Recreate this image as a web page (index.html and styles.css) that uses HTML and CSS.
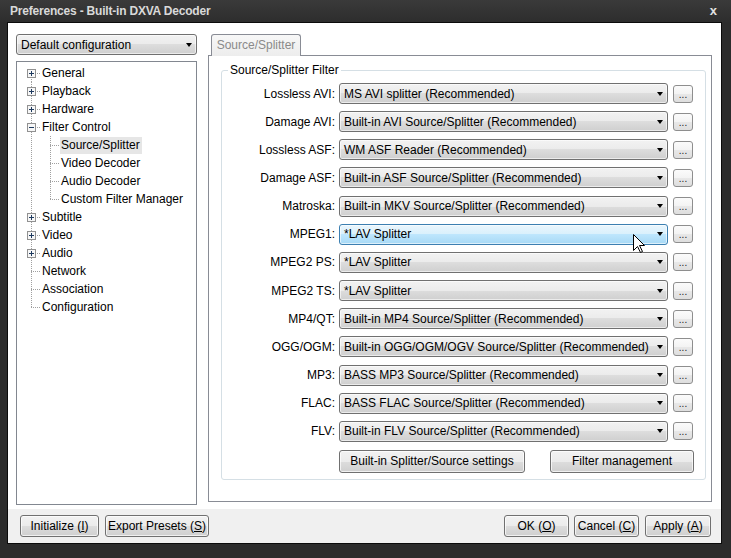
FILE: index.html
```html
<!DOCTYPE html>
<html>
<head>
<meta charset="utf-8">
<title>Preferences - Built-in DXVA Decoder</title>
<link rel="stylesheet" href="styles.css">
</head>
<body>
<div class="window">
  <div class="titlebar">
    <span class="title">Preferences - Built-in DXVA Decoder</span>
    <span class="close">x</span>
  </div>
  <div class="frame">
    <div class="client">
      <div class="main">
        <div class="left">
          <div class="select"><span>Default configuration</span><span class="arrow"></span></div>
          <div class="tree">
            <div class="trow"><span class="ln ln-first"><svg class="box" width="9" height="9" viewBox="0 0 9 9"><rect x="0.5" y="0.5" width="8" height="8" fill="#f7f7f7" stroke="#919191"/><path d="M2 4.5H7M4.5 2V7" stroke="#1e3a5f"/></svg></span><span class="tl">General</span></div>
            <div class="trow"><span class="ln ln-mid"><svg class="box" width="9" height="9" viewBox="0 0 9 9"><rect x="0.5" y="0.5" width="8" height="8" fill="#f7f7f7" stroke="#919191"/><path d="M2 4.5H7M4.5 2V7" stroke="#1e3a5f"/></svg></span><span class="tl">Playback</span></div>
            <div class="trow"><span class="ln ln-mid"><svg class="box" width="9" height="9" viewBox="0 0 9 9"><rect x="0.5" y="0.5" width="8" height="8" fill="#f7f7f7" stroke="#919191"/><path d="M2 4.5H7M4.5 2V7" stroke="#1e3a5f"/></svg></span><span class="tl">Hardware</span></div>
            <div class="trow"><span class="ln ln-mid"><svg class="box" width="9" height="9" viewBox="0 0 9 9"><rect x="0.5" y="0.5" width="8" height="8" fill="#f7f7f7" stroke="#919191"/><path d="M2 4.5H7" stroke="#1e3a5f"/></svg></span><span class="tl">Filter Control</span></div>
            <div class="trow"><span class="ln ln-v"></span><span class="ln ln-mid"></span><span class="tl sel">Source/Splitter</span></div>
            <div class="trow"><span class="ln ln-v"></span><span class="ln ln-mid"></span><span class="tl">Video Decoder</span></div>
            <div class="trow"><span class="ln ln-v"></span><span class="ln ln-mid"></span><span class="tl">Audio Decoder</span></div>
            <div class="trow"><span class="ln ln-v"></span><span class="ln ln-last"></span><span class="tl">Custom Filter Manager</span></div>
            <div class="trow"><span class="ln ln-mid"><svg class="box" width="9" height="9" viewBox="0 0 9 9"><rect x="0.5" y="0.5" width="8" height="8" fill="#f7f7f7" stroke="#919191"/><path d="M2 4.5H7M4.5 2V7" stroke="#1e3a5f"/></svg></span><span class="tl">Subtitle</span></div>
            <div class="trow"><span class="ln ln-mid"><svg class="box" width="9" height="9" viewBox="0 0 9 9"><rect x="0.5" y="0.5" width="8" height="8" fill="#f7f7f7" stroke="#919191"/><path d="M2 4.5H7M4.5 2V7" stroke="#1e3a5f"/></svg></span><span class="tl">Video</span></div>
            <div class="trow"><span class="ln ln-mid"><svg class="box" width="9" height="9" viewBox="0 0 9 9"><rect x="0.5" y="0.5" width="8" height="8" fill="#f7f7f7" stroke="#919191"/><path d="M2 4.5H7M4.5 2V7" stroke="#1e3a5f"/></svg></span><span class="tl">Audio</span></div>
            <div class="trow"><span class="ln ln-mid"></span><span class="tl">Network</span></div>
            <div class="trow"><span class="ln ln-mid"></span><span class="tl">Association</span></div>
            <div class="trow"><span class="ln ln-last"></span><span class="tl">Configuration</span></div>
          </div>
        </div>
        <div class="right">
          <div class="tabs"><div class="tab">Source/Splitter</div></div>
          <div class="panel">
            <fieldset class="group">
              <legend>Source/Splitter Filter</legend>
              <div class="rows">
                <div class="row"><span class="lbl">Lossless AVI:</span><div class="combo"><span class="ctext">MS AVI splitter (Recommended)</span><span class="arrow"></span></div><div class="dots">...</div></div>
                <div class="row"><span class="lbl">Damage AVI:</span><div class="combo"><span class="ctext">Built-in AVI Source/Splitter (Recommended)</span><span class="arrow"></span></div><div class="dots">...</div></div>
                <div class="row"><span class="lbl">Lossless ASF:</span><div class="combo"><span class="ctext">WM ASF Reader (Recommended)</span><span class="arrow"></span></div><div class="dots">...</div></div>
                <div class="row"><span class="lbl">Damage ASF:</span><div class="combo"><span class="ctext">Built-in ASF Source/Splitter (Recommended)</span><span class="arrow"></span></div><div class="dots">...</div></div>
                <div class="row"><span class="lbl">Matroska:</span><div class="combo"><span class="ctext">Built-in MKV Source/Splitter (Recommended)</span><span class="arrow"></span></div><div class="dots">...</div></div>
                <div class="row"><span class="lbl">MPEG1:</span><div class="combo hover"><span class="ctext">*LAV Splitter</span><span class="arrow"></span></div><div class="dots">...</div></div>
                <div class="row"><span class="lbl">MPEG2 PS:</span><div class="combo"><span class="ctext">*LAV Splitter</span><span class="arrow"></span></div><div class="dots">...</div></div>
                <div class="row"><span class="lbl">MPEG2 TS:</span><div class="combo"><span class="ctext">*LAV Splitter</span><span class="arrow"></span></div><div class="dots">...</div></div>
                <div class="row"><span class="lbl">MP4/QT:</span><div class="combo"><span class="ctext">Built-in MP4 Source/Splitter (Recommended)</span><span class="arrow"></span></div><div class="dots">...</div></div>
                <div class="row"><span class="lbl">OGG/OGM:</span><div class="combo"><span class="ctext">Built-in OGG/OGM/OGV Source/Splitter (Recommended)</span><span class="arrow"></span></div><div class="dots">...</div></div>
                <div class="row"><span class="lbl">MP3:</span><div class="combo"><span class="ctext">BASS MP3 Source/Splitter (Recommended)</span><span class="arrow"></span></div><div class="dots">...</div></div>
                <div class="row"><span class="lbl">FLAC:</span><div class="combo"><span class="ctext">BASS FLAC Source/Splitter (Recommended)</span><span class="arrow"></span></div><div class="dots">...</div></div>
                <div class="row"><span class="lbl">FLV:</span><div class="combo"><span class="ctext">Built-in FLV Source/Splitter (Recommended)</span><span class="arrow"></span></div><div class="dots">...</div></div>
              </div>
              <div class="actions">
                <div class="btn btn-settings">Built-in Splitter/Source settings</div>
                <div class="btn btn-filter">Filter management</div>
              </div>
            </fieldset>
          </div>
        </div>
      </div>
      <div class="bottom">
        <div class="btn btn-init">Initialize (<u>I</u>)</div>
        <div class="btn btn-export">Export Presets (<u>S</u>)</div>
        <div class="spacer"></div>
        <div class="btn btn-ok">OK (<u>O</u>)</div>
        <div class="btn btn-cancel">Cancel (<u>C</u>)</div>
        <div class="btn btn-apply">Apply (<u>A</u>)</div>
      </div>
    </div>
  </div>
  <svg class="cursor" width="13" height="20" viewBox="0 0 13 20"><path d="M0.5 0.5V16.5L4.5 12.5L7.5 18.5L9.5 17.5L6.5 11.5H11.5Z" fill="#fff" stroke="#000" stroke-linejoin="miter"/></svg>
</div>
</body>
</html>
```
FILE: styles.css
```css
html, body {
  margin: 0;
  padding: 0;
  background: #2b2b2b;
}
body {
  font-family: "Liberation Sans", Arial, sans-serif;
  font-size: 12px;
  color: #000;
}
.window {
  width: 731px;
  height: 558px;
  display: flex;
  flex-direction: column;
  position: relative;
  background: #2c2c2c;
  overflow: hidden;
}
.titlebar {
  height: 22px;
  flex: none;
  display: flex;
  align-items: center;
  justify-content: space-between;
  padding: 0 14px 1px 10px;
  box-sizing: border-box;
  background: linear-gradient(#3a3a3a, #2d2d2d);
  color: #d9d9d9;
  font-weight: bold;
  letter-spacing: -0.2px;
}
.close {
  font-size: 13px;
  color: #e2e2e2;
  letter-spacing: 0;
}
.frame {
  flex: 1;
  display: flex;
  padding: 0 9px 14px 7px;
}
.client {
  flex: 1;
  display: flex;
  flex-direction: column;
  border: 1px solid #0b0b0b;
  background: #fff;
}
.main {
  height: 486px;
  flex: none;
  display: flex;
  gap: 11px;
  padding: 11px 9px 0 8px;
  box-sizing: border-box;
}
.left {
  width: 181px;
  flex: none;
  display: flex;
  flex-direction: column;
}
.select {
  height: 21px;
  flex: none;
  box-sizing: border-box;
  border: 1px solid #707070;
  border-radius: 3px;
  background: linear-gradient(#f2f2f2 0%, #ebebeb 50%, #dddddd 50%, #cfcfcf 100%);
  box-shadow: inset 0 0 0 1px rgba(255,255,255,0.6);
  display: flex;
  align-items: center;
  justify-content: space-between;
  padding: 0 4px 0 4px;
  margin-bottom: 6px;
}
.arrow {
  width: 0;
  height: 0;
  border-left: 3.5px solid transparent;
  border-right: 3.5px solid transparent;
  border-top: 4px solid #000;
  flex: none;
}
.tree {
  height: 444px;
  flex: none;
  box-sizing: border-box;
  border: 1px solid #828790;
  background: #fff;
  padding: 2px 0 0 5px;
}
.trow {
  height: 18px;
  display: flex;
  align-items: center;
}
.ln {
  width: 19px;
  height: 18px;
  flex: none;
  display: flex;
  align-items: center;
  justify-content: center;
  background-repeat: no-repeat;
  --vd: repeating-linear-gradient(to bottom, #a0a0a0 0 1px, transparent 1px 2px);
  --hd: repeating-linear-gradient(to right, #a0a0a0 0 1px, transparent 1px 2px);
}
.ln-v {
  background-image: var(--vd);
  background-size: 1px 18px;
  background-position: 9px 0;
}
.ln-mid {
  background-image: var(--vd), var(--hd);
  background-size: 1px 18px, 10px 1px;
  background-position: 9px 0, 9px 9px;
}
.ln-first {
  background-image: var(--vd), var(--hd);
  background-size: 1px 9px, 10px 1px;
  background-position: 9px 9px, 9px 9px;
}
.ln-last {
  background-image: var(--vd), var(--hd);
  background-size: 1px 10px, 10px 1px;
  background-position: 9px 0, 9px 9px;
}
.box {
  display: block;
}
.tl {
  padding: 0 1px;
  height: 17px;
  line-height: 17px;
  white-space: nowrap;
}
.tl.sel {
  background: #e6e6e6;
  padding: 0 2px 0 1px;
}
.right {
  width: 504px;
  flex: none;
  display: flex;
  flex-direction: column;
}
.tabs {
  height: 21px;
  flex: none;
  display: flex;
  padding-left: 3px;
  position: relative;
  z-index: 1;
}
.tab {
  width: 90px;
  height: 22px;
  box-sizing: border-box;
  border: 1px solid #898c95;
  border-bottom: none;
  border-radius: 3px 3px 0 0;
  background: linear-gradient(#f7f7f7, #ededed);
  color: #8a8a8a;
  display: flex;
  align-items: center;
  justify-content: center;
  padding-bottom: 1px;
}
.panel {
  height: 447px;
  flex: none;
  box-sizing: border-box;
  border: 1px solid #898c95;
  background: #fff;
  padding: 7px 5px 21px 12px;
  display: flex;
  flex-direction: column;
}
.group {
  flex: 1;
  margin: 0;
  min-width: 0;
  border: 1px solid #d5dfe5;
  border-radius: 3px;
  padding: 6px 0 0 6px;
  display: flex;
  flex-direction: column;
}
.group legend {
  padding: 0 2px;
  line-height: 14px;
  font-size: 12px;
}
.rows {
  display: flex;
  flex-direction: column;
  gap: 7.17px;
}
.row {
  height: 21px;
  display: flex;
  align-items: center;
}
.lbl {
  width: 107px;
  flex: none;
  text-align: right;
  margin-right: 4px;
  white-space: nowrap;
}
.combo {
  width: 329px;
  height: 21px;
  flex: none;
  box-sizing: border-box;
  border: 1px solid #707070;
  border-radius: 3px;
  background: linear-gradient(#f2f2f2 0%, #ebebeb 50%, #dddddd 50%, #cfcfcf 100%);
  box-shadow: inset 0 0 0 1px rgba(255,255,255,0.6);
  display: flex;
  align-items: center;
  justify-content: space-between;
  padding: 0 4px 0 4px;
  white-space: nowrap;
}
.combo.hover {
  border-color: #3c7fb1;
  background: linear-gradient(#eaf6fd 0%, #d9f0fc 50%, #bee6fd 50%, #a7d9f5 100%);
}
.dots {
  width: 20px;
  height: 18px;
  flex: none;
  margin-left: 5px;
  box-sizing: border-box;
  border: 1px solid #8e8e8e;
  border-radius: 3px;
  background: linear-gradient(#fbfbfb 0%, #f3f3f3 50%, #e8e8e8 50%, #dedede 100%);
  font-size: 10px;
  line-height: 9px;
  display: flex;
  align-items: flex-end;
  justify-content: center;
  padding-bottom: 3px;
  color: #222;
}
.actions {
  margin-top: 8px;
  display: flex;
  padding-left: 111px;
}
.btn {
  box-sizing: border-box;
  border: 1px solid #707070;
  border-radius: 3px;
  background: linear-gradient(#f2f2f2 0%, #ebebeb 50%, #dddddd 50%, #cfcfcf 100%);
  box-shadow: inset 0 0 0 1px rgba(255,255,255,0.7);
  display: flex;
  align-items: center;
  justify-content: center;
  white-space: nowrap;
  flex: none;
}
.btn-settings { width: 186px; height: 23px; }
.btn-filter { width: 144px; height: 23px; margin-left: 25px; }
.bottom {
  flex: 1;
  background: #f0f0f0;
  display: flex;
  align-items: flex-start;
  padding: 6px 10px 0 12px;
}
.bottom .btn { height: 22px; }
.btn-init { width: 79px; }
.btn-export { width: 104px; margin-left: 6px; }
.spacer { flex: 1; }
.btn-ok { width: 65px; }
.btn-cancel { width: 65px; margin-left: 5px; }
.btn-apply { width: 66px; margin-left: 6px; }
.cursor {
  position: absolute;
  left: 633px;
  top: 234px;
}
```
